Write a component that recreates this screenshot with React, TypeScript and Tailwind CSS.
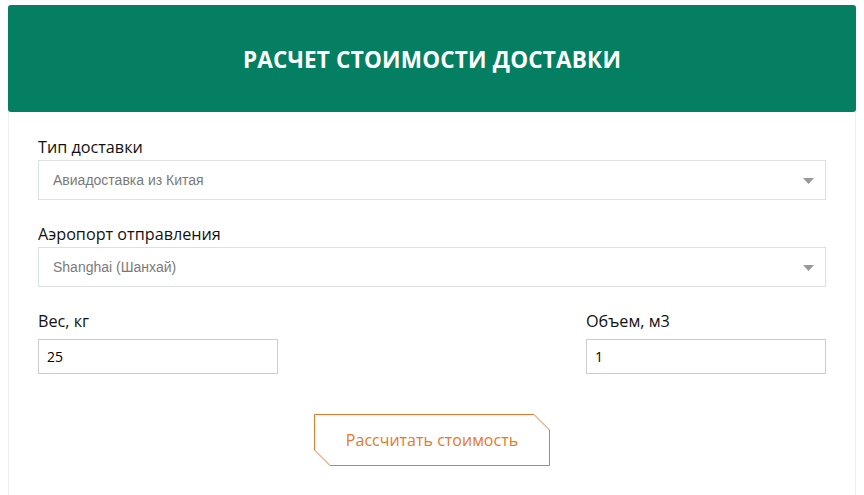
import React from "react";

function Select({ value }: { value: string }) {
  return (
    <div className="relative flex h-[40px] w-full items-center border border-[#dde1e6] bg-white pl-[14px]">
      <span className="text-[14px] text-[#7a7a7a]" style={{ fontFamily: '"Liberation Sans", Arial, sans-serif' }}>
        {value}
      </span>
      <svg className="absolute right-[11px] top-[17px]" width="11" height="6" viewBox="0 0 11 6">
        <polygon points="0,0 11,0 5.5,6" fill="#999" />
      </svg>
    </div>
  );
}

export default function App() {
  const font = { fontFamily: '"Open Sans", "Noto Sans", sans-serif' };
  return (
    <div className="min-h-[495px] bg-white pt-[5px]" style={font}>
      <div className="mx-[8px] flex min-h-[490px] flex-col border-x border-[#eeeeee]">
        <div className="-mx-px flex h-[107px] items-center justify-center rounded-[3px] bg-[#047f62] pt-[3px]">
          <h1 className="text-[22.5px] font-bold tracking-[0.2px] text-white">РАСЧЕТ СТОИМОСТИ ДОСТАВКИ</h1>
        </div>
        <div className="flex flex-col px-[29px] pt-[25px]">
          <label className="mb-[3px] text-[16.2px] leading-[20px] text-[#111]">Тип доставки</label>
          <Select value="Авиадоставка из Китая" />
          <label className="mb-[3px] mt-[24px] text-[16.2px] leading-[20px] text-[#111]">Аэропорт отправления</label>
          <Select value="Shanghai (Шанхай)" />
          <div className="mt-[24px] flex justify-between">
            <div className="flex flex-col">
              <label className="mb-[8px] text-[16.2px] leading-[20px] text-[#111]">Вес, кг</label>
              <div className="flex h-[35px] w-[240px] items-center border border-[#cccccc] pl-[8px] text-[14px] text-black">25</div>
            </div>
            <div className="flex flex-col">
              <label className="mb-[8px] text-[16.2px] leading-[20px] text-[#111]">Объем, м3</label>
              <div className="flex h-[35px] w-[240px] items-center border border-[#cccccc] pl-[8px] text-[14px] text-black">1</div>
            </div>
          </div>
          <div className="mt-[40px] flex justify-center">
            <button className="relative flex h-[52px] w-[236px] items-center justify-center bg-transparent text-[16px] text-[#e8792a]">
              <svg className="absolute inset-0" width="236" height="52" viewBox="0 0 236 52">
                <polygon
                  points="0.5,0.5 220,0.5 235.5,16 235.5,51.5 16,51.5 0.5,36"
                  fill="none"
                  stroke="#e8792a"
                  strokeWidth="1"
                />
              </svg>
              <span className="relative">Рассчитать стоимость</span>
            </button>
          </div>
        </div>
      </div>
    </div>
  );
}
